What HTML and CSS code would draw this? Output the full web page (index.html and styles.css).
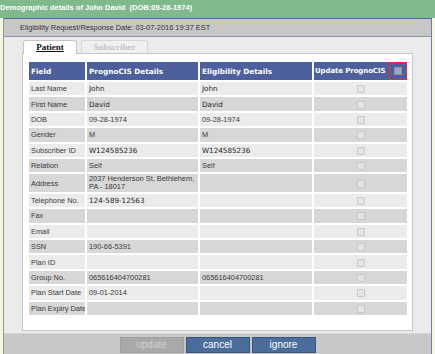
FILE: index.html
```html
<!DOCTYPE html>
<html lang="en">
<head>
<meta charset="UTF-8">
<title>Demographic details</title>
<link rel="stylesheet" href="styles.css">
</head>
<body>

<div class="titlebar">Demographic details of John David &nbsp;(DOB:09-28-1974)</div>

<div class="dialog">
    <div class="datebar">Eligibility Request/Response Date: 03-07-2016 19:37 EST</div>

    <div class="content">
        <div class="tabs">
            <div class="tab active"><span>Patient</span></div>
            <div class="tab disabled"><span>Subscriber</span></div>
        </div>

        <div class="panel">
            <table class="elig-table">
                <thead>
                    <tr>
                        <th class="col-field">Field</th>
                        <th class="col-progno">PrognoCIS Details</th>
                        <th class="col-elig">Eligibility Details</th>
                        <th class="col-update">
                            <div class="update-head">
                                <span class="update-label">Update PrognoCIS</span>
                                <span class="select-all"><span class="cb-all"></span></span>
                            </div>
                        </th>
                    </tr>
                </thead>
                <tbody>
                    <tr class="light">
                        <td>Last Name</td>
                        <td class="val">John</td>
                        <td class="val">John</td>
                        <td class="chk"><span class="cb"></span></td>
                    </tr>
                    <tr class="dark">
                        <td>First Name</td>
                        <td class="val">David</td>
                        <td class="val">David</td>
                        <td class="chk"><span class="cb"></span></td>
                    </tr>
                    <tr class="light">
                        <td>DOB</td>
                        <td>09-28-1974</td>
                        <td>09-28-1974</td>
                        <td class="chk"><span class="cb"></span></td>
                    </tr>
                    <tr class="dark">
                        <td>Gender</td>
                        <td>M</td>
                        <td>M</td>
                        <td class="chk"><span class="cb"></span></td>
                    </tr>
                    <tr class="light">
                        <td>Subscriber ID</td>
                        <td class="val">W124585236</td>
                        <td class="val">W124585236</td>
                        <td class="chk"><span class="cb"></span></td>
                    </tr>
                    <tr class="dark">
                        <td>Relation</td>
                        <td>Self</td>
                        <td>Self</td>
                        <td class="chk"><span class="cb"></span></td>
                    </tr>
                    <tr class="dark tall">
                        <td>Address</td>
                        <td class="wrap">2037 Henderson St, Bethlehem,<br>PA - 18017</td>
                        <td></td>
                        <td class="chk"><span class="cb"></span></td>
                    </tr>
                    <tr class="light">
                        <td>Telephone No.</td>
                        <td class="val">124-589-12563</td>
                        <td></td>
                        <td class="chk"><span class="cb"></span></td>
                    </tr>
                    <tr class="dark">
                        <td>Fax</td>
                        <td></td>
                        <td></td>
                        <td class="chk"><span class="cb"></span></td>
                    </tr>
                    <tr class="light">
                        <td>Email</td>
                        <td></td>
                        <td></td>
                        <td class="chk"><span class="cb"></span></td>
                    </tr>
                    <tr class="dark">
                        <td>SSN</td>
                        <td>190-66-5391</td>
                        <td></td>
                        <td class="chk"><span class="cb"></span></td>
                    </tr>
                    <tr class="light">
                        <td>Plan ID</td>
                        <td></td>
                        <td></td>
                        <td class="chk"><span class="cb"></span></td>
                    </tr>
                    <tr class="dark">
                        <td>Group No.</td>
                        <td>065616404700281</td>
                        <td>065616404700281</td>
                        <td class="chk"><span class="cb"></span></td>
                    </tr>
                    <tr class="light">
                        <td>Plan Start Date</td>
                        <td>09-01-2014</td>
                        <td></td>
                        <td class="chk"><span class="cb"></span></td>
                    </tr>
                    <tr class="dark">
                        <td>Plan Expiry Date</td>
                        <td></td>
                        <td></td>
                        <td class="chk"><span class="cb"></span></td>
                    </tr>
                </tbody>
            </table>
        </div>
    </div>

    <div class="footer">
        <button class="btn btn-off" disabled>update</button>
        <button class="btn">cancel</button>
        <button class="btn">ignore</button>
    </div>
</div>

</body>
</html>
```

FILE: styles.css
```css
body {
    margin: 0;
    padding: 0;
    background-color: #f5f7dc;
    font-family: "Liberation Sans", Arial, sans-serif;
    font-size: 7.4px;
    color: #333;
}

.titlebar {
    height: 18px;
    line-height: 15px;
    background-color: #80b98b;
    color: #fff;
    font-weight: bold;
    font-size: 7.5px;
    white-space: nowrap;
}

.dialog {
    margin: 0 3px;
    border-left: 1px solid #8f97b3;
    border-right: 1px solid #6f7ca6;
    border-top: 1px solid #55669e;
}

.datebar {
    height: 17px;
    line-height: 17px;
    padding-left: 16px;
    background-color: #c7c7c7;
    border-bottom: 1px solid #8d93ad;
    color: #333;
}

.content {
    background-color: #ebebeb;
    padding: 3px 18px 2px 18px;
}

/* tabs */

.tabs {
    display: flex;
    height: 13px;
    padding-left: 1px;
}

.tab {
    height: 13px;
    box-sizing: border-box;
    border: 1px solid #c4c4c4;
    border-bottom: none;
    border-radius: 3px 3px 0 0;
    font-family: "Liberation Serif", "Times New Roman", serif;
    font-weight: bold;
    font-size: 9px;
    text-align: center;
    line-height: 13px;
}

.tab.active {
    width: 54px;
    height: 14px;
    background-color: #fff;
    color: #111;
    position: relative;
    z-index: 1;
}

.tab.active span {
    text-decoration: underline;
}

.tab.disabled {
    width: 67px;
    margin-left: 4px;
    background-color: #f0f0f0;
    border-color: #d6d6d6;
    color: #c4c4c4;
}

.panel {
    background-color: #fff;
    border: 1px solid #c6c6c6;
    padding: 8px 5px 13px 6px;
}

/* table */

.elig-table {
    width: 378px;
    border-collapse: separate;
    border-spacing: 0;
    table-layout: fixed;
}

.elig-table th,
.elig-table td {
    box-sizing: border-box;
    border-right: 2px solid #fff;
    border-bottom: 2px solid #fff;
    padding: 0 0 0 2px;
    text-align: left;
    vertical-align: middle;
    white-space: nowrap;
    overflow: hidden;
}

.elig-table th:last-child,
.elig-table td:last-child {
    border-right: none;
}

.elig-table th {
    height: 20px;
    background-color: #4e5f9d;
    color: #fff;
    font-family: "DejaVu Sans", Verdana, sans-serif;
    font-weight: bold;
    font-size: 7.3px;
}

.col-field { width: 58px; }
.col-progno { width: 113px; }
.col-elig { width: 114px; }
.col-update { width: 93px; }

.elig-table th.col-update {
    padding: 0;
}

.update-head {
    display: flex;
    height: 18px;
    align-items: center;
}

.update-label {
    flex: 1;
    min-width: 0;
    overflow: hidden;
    padding-left: 1px;
    font-size: 7px;
    letter-spacing: -0.1px;
}

.select-all {
    flex: none;
    width: 18px;
    height: 18px;
    box-sizing: border-box;
    border: 1px solid #ee2b2b;
    display: flex;
    align-items: center;
    justify-content: center;
}

.cb-all {
    width: 8px;
    height: 8px;
    box-sizing: border-box;
    background-color: #a4a6b8;
    border: 1px solid #8e90a8;
}

.elig-table td {
    height: 15.4px;
    color: #3a3a3a;
    line-height: 9px;
}

.elig-table tr.tall td {
    height: 19.5px;
}

.elig-table td.wrap {
    line-height: 8.5px;
}

.elig-table tr.light td {
    background-color: #ebebeb;
}

.elig-table tr.dark td {
    background-color: #d7d7d7;
}

.elig-table td.val {
    font-family: "DejaVu Sans", Verdana, sans-serif;
    font-size: 7.2px;
    color: #1e1e1e;
}

.elig-table td.chk {
    text-align: center;
    padding: 0;
}

.cb {
    display: inline-block;
    width: 8px;
    height: 8px;
    box-sizing: border-box;
    border: 1px solid #c8c8c8;
    border-radius: 1px;
    background-color: #e4e4e4;
    vertical-align: middle;
}

/* footer buttons */

.footer {
    background-color: #c8c8c8;
    border-top: 1px dotted #e6e6e6;
    height: 21px;
    display: flex;
    justify-content: center;
    align-items: flex-start;
    gap: 2px;
    padding-top: 3px;
    box-sizing: border-box;
}

.btn {
    width: 64px;
    height: 16px;
    padding: 0;
    border: 1px solid #34557f;
    background-color: #4a6d9b;
    color: #fff;
    font-family: "Liberation Sans", Arial, sans-serif;
    font-size: 10px;
    line-height: 14px;
}

.btn-off {
    background-color: #a9a9a9;
    border-color: #a0a0a0;
    color: #d2d2d2;
}
```
